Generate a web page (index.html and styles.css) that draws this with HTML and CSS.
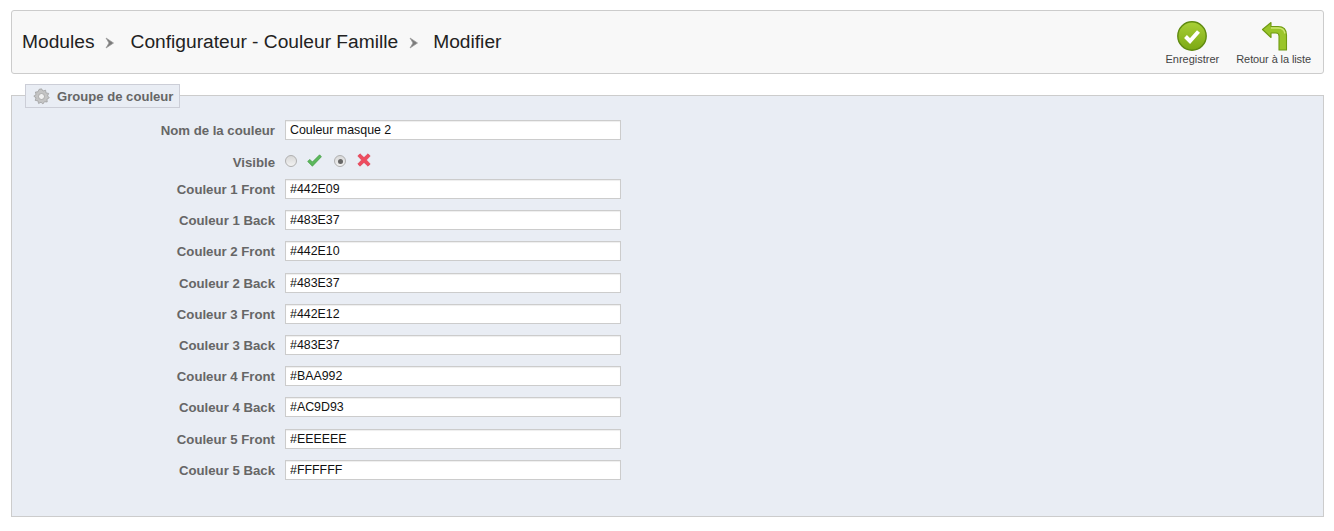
FILE: index.html
```html
<!DOCTYPE html>
<html lang="fr">
    <head>
        <meta charset="UTF-8">
        <title>Configurateur - Couleur Famille</title>
        <link rel="stylesheet" href="styles.css">
    </head>
    <body>
        <div class="toolbar">
            <h1 class="breadcrumb">
                <span>Modules</span>
                <svg class="crumb-sep" width="11" height="12" viewBox="0 0 11 12"><path d="M2 1 L9.5 6 L2 11 L5 6 Z" fill="#7a7a7a" stroke="#999" stroke-width="0.8"/></svg>
                <span>Configurateur - Couleur Famille</span>
                <svg class="crumb-sep crumb-sep-last" width="11" height="12" viewBox="0 0 11 12"><path d="M2 1 L9.5 6 L2 11 L5 6 Z" fill="#7a7a7a" stroke="#999" stroke-width="0.8"/></svg>
                <span>Modifier</span>
            </h1>
            <div class="actions">
                <a class="action action-save">
                    <svg width="32" height="32" viewBox="0 0 32 32">
                        <defs>
                            <linearGradient id="save-fill" x1="0" y1="0" x2="0" y2="1">
                                <stop offset="0" stop-color="#a9d037"/>
                                <stop offset="1" stop-color="#7ba813"/>
                            </linearGradient>
                        </defs>
                        <circle cx="16" cy="16" r="14.2" fill="url(#save-fill)" stroke="#5f8a10" stroke-width="1.4"/>
                        <path d="M9.5 16.5 L14 21 L22.5 11.5" fill="none" stroke="#fff" stroke-width="4"/>
                    </svg>
                    <span>Enregistrer</span>
                </a>
                <a class="action action-back">
                    <svg width="32" height="32" viewBox="0 0 32 32">
                        <path d="M4.5 9.5 L13 2.5 L13 6.5 L20 6.5 Q28.5 6.5 28.5 15 L28.5 30 L21 30 L21 16 Q21 13 18 13 L13 13 L13 17.5 Z" fill="#9ac52a" stroke="#6f9a12" stroke-width="1.1" stroke-linejoin="round"/>
                        <path d="M13 8 L20 8 Q26 8 27 13.5" fill="none" stroke="#cde573" stroke-width="1.4"/>
                    </svg>
                    <span>Retour à la liste</span>
                </a>
            </div>
        </div>

        <form class="panel">
            <div class="legend">
                <svg width="17" height="17" viewBox="0 0 17 17">
                    <path d="M8.5 0.8 L10 3 L12.6 2.2 L13 4.9 L15.7 5.4 L14.6 7.9 L16.3 9.8 L14 11.2 L14.2 14 L11.5 13.7 L9.9 16 L8 14.2 L5.6 15.5 L4.9 12.8 L2.2 12.4 L3 9.8 L0.8 8.2 L3 6.6 L2.4 4 L5 3.8 L6 1.4 Z" fill="#c4c4c4" stroke="#999" stroke-width="0.7"/>
                    <circle cx="8.5" cy="8.5" r="3" fill="#f0f0f0" stroke="#999" stroke-width="0.7"/>
                </svg>
                Groupe de couleur
            </div>
            <div class="row row-first">
                <label>Nom de la couleur</label>
                <input type="text" value="Couleur masque 2">
            </div>
            <div class="row row-visible">
                <label>Visible</label>
                <div class="switch">
                    <span class="radio"></span>
                    <svg class="icon-yes" width="15" height="13" viewBox="0 0 15 13"><path d="M0.7 7.5 L2.8 5.4 L5.4 8 L12.6 0.8 L14.4 2.8 L5.4 12.2 Z" fill="#5cb85c" stroke="#3f9a3f" stroke-width="0.7"/></svg>
                    <span class="radio radio-on"></span>
                    <svg class="icon-no" width="14" height="14" viewBox="0 0 14 14"><path d="M0.8 3 L3 0.8 L7 4.6 L11 0.8 L13.2 3 L9.4 7 L13.2 11 L11 13.2 L7 9.4 L3 13.2 L0.8 11 L4.6 7 Z" fill="#ee4c5f" stroke="#d9394d" stroke-width="0.6"/></svg>
                </div>
            </div>
            <div class="row"><label>Couleur 1 Front</label><input type="text" value="#442E09"></div>
            <div class="row"><label>Couleur 1 Back</label><input type="text" value="#483E37"></div>
            <div class="row"><label>Couleur 2 Front</label><input type="text" value="#442E10"></div>
            <div class="row"><label>Couleur 2 Back</label><input type="text" value="#483E37"></div>
            <div class="row"><label>Couleur 3 Front</label><input type="text" value="#442E12"></div>
            <div class="row"><label>Couleur 3 Back</label><input type="text" value="#483E37"></div>
            <div class="row"><label>Couleur 4 Front</label><input type="text" value="#BAA992"></div>
            <div class="row"><label>Couleur 4 Back</label><input type="text" value="#AC9D93"></div>
            <div class="row"><label>Couleur 5 Front</label><input type="text" value="#EEEEEE"></div>
            <div class="row"><label>Couleur 5 Back</label><input type="text" value="#FFFFFF"></div>
        </form>
    </body>
</html>
```

FILE: styles.css
```css
* {
    box-sizing: border-box;
}

body {
    margin: 0;
    padding: 10px 10px 0 11px;
    background-color: #ffffff;
    font-family: "Liberation Sans", Arial, sans-serif;
    color: #666666;
}

.toolbar {
    height: 64px;
    padding: 0 12px 0 10px;
    display: flex;
    justify-content: space-between;
    background-color: #f8f8f8;
    border: 1px solid #cccccc;
    border-radius: 3px;
}

.breadcrumb {
    margin: 0;
    padding-top: 19px;
    display: flex;
    align-items: flex-start;
    font-size: 19.2px;
    line-height: 24px;
    font-weight: normal;
    color: #222222;
}

.crumb-sep {
    margin: 7px 15.5px 0 9.5px;
}

.crumb-sep-last {
    margin-right: 14.5px;
}

.actions {
    display: flex;
    gap: 17px;
    padding-top: 9px;
}

.action {
    display: flex;
    flex-direction: column;
    align-items: center;
    font-size: 11px;
    line-height: 14px;
    color: #444444;
}

.action-back {
    letter-spacing: -0.1px;
}

.panel {
    position: relative;
    height: 422px;
    margin-top: 21px;
    padding-top: 24px;
    background-color: #e9edf4;
    border: 1px solid #cccccc;
}

.legend {
    position: absolute;
    left: 13px;
    top: -12px;
    width: 155px;
    height: 24px;
    padding-left: 7px;
    display: flex;
    align-items: center;
    gap: 7px;
    font-size: 13.1px;
    font-weight: bold;
    color: #666666;
    background-color: #e9edf4;
    border: 1px solid #ccced7;
}

.row {
    height: 31.2px;
    display: flex;
    align-items: flex-start;
    gap: 10px;
}

.row-visible {
    height: 28px;
    padding-top: 1px;
}

.row-first {
    height: 31px;
}

label {
    width: 263px;
    text-align: right;
    font-size: 13.2px;
    font-weight: bold;
    line-height: 21px;
}

input {
    width: 336px;
    height: 20px;
    padding: 0 4px;
    font-family: "Liberation Sans", Arial, sans-serif;
    font-size: 12.4px;
    color: #111111;
    background-color: #ffffff;
    border: 1px solid #cccccc;
    box-shadow: inset 0 1px 1px #eeeeee;
    outline: none;
}

.switch {
    display: flex;
    align-items: center;
    height: 18px;
}

.radio {
    width: 12px;
    height: 12px;
    border-radius: 50%;
    background: linear-gradient(#d8d8d8, #f2f2f2);
    border: 1px solid #b0b0b0;
}

.radio-on {
    position: relative;
    margin-left: 12px;
}

.radio-on::after {
    content: "";
    position: absolute;
    left: 2.5px;
    top: 2.5px;
    width: 5px;
    height: 5px;
    border-radius: 50%;
    background-color: #666666;
}

.icon-yes {
    margin: -2px 0 0 10px;
}

.icon-no {
    margin: -2px 0 0 11px;
}
```
